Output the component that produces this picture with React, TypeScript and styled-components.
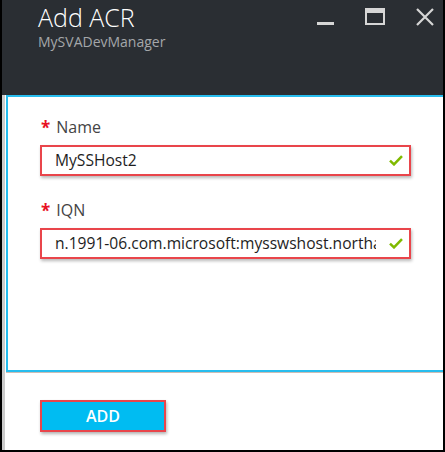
import styled, { createGlobalStyle } from "styled-components";

const GlobalStyle = createGlobalStyle`
  html, body {
    margin: 0;
    padding: 0;
    background: #000;
  }
  body {
    font-family: "Open Sans", "Noto Sans", Arial, sans-serif;
  }
`;

const Frame = styled.div`
  width: 441px;
  height: 450px;
  margin-left: 2px;
  display: flex;
  flex-direction: column;
  background: #fff;
  overflow: hidden;
`;

const Header = styled.header`
  height: 95px;
  flex: none;
  display: flex;
  padding: 2px 8px 0 36px;
  box-sizing: border-box;
  background: #2a2e33;
`;

const TitleBlock = styled.div`
  display: flex;
  flex-direction: column;
`;

const Title = styled.h1`
  margin: 0;
  font-size: 25px;
  line-height: 30px;
  font-weight: 300;
  color: #fff;
`;

const Subtitle = styled.div`
  margin-top: 1px;
  font-size: 14px;
  line-height: 18px;
  color: #a4a7aa;
`;

const Controls = styled.div`
  margin-left: auto;
  display: flex;
  gap: 30px;
  padding-top: 6px;
`;

const Body = styled.div`
  flex: 1;
  display: flex;
  flex-direction: column;
  border-left: 3px solid #cbcbcb;
  padding-left: 1px;
`;

const Blade = styled.section`
  height: 277px;
  box-sizing: border-box;
  border: 2px solid #27bdee;
  border-right: none;
  padding: 19px 32px 0 32px;
  box-shadow: 0 1px 0 #cdbdb5;
  display: flex;
  flex-direction: column;
  gap: 23px;
`;

const Group = styled.div`
  display: flex;
  flex-direction: column;
  gap: 7px;
`;

const Label = styled.label`
  display: flex;
  align-items: center;
  gap: 6px;
  padding-left: 1px;
  font-size: 16px;
  line-height: 20px;
  color: #444;
`;

const Required = styled.span`
  color: #e81123;
  font-weight: 700;
  font-size: 17px;
  line-height: 20px;
  margin-top: 2px;
`;

const Field = styled.div`
  height: 31px;
  box-sizing: border-box;
  border: 2px solid #e9454b;
  box-shadow: 1px 2px 3px rgba(0, 0, 0, 0.28);
  display: flex;
  align-items: center;
  gap: 13px;
  padding: 0 6px 0 13px;
  background: #fff;
`;

const Value = styled.span`
  flex: 1;
  min-width: 0;
  overflow: hidden;
  white-space: nowrap;
  font-size: 15.6px;
  line-height: 27px;
  color: #1e1e1e;
`;

const Footer = styled.div`
  padding: 28px 0 0 34px;
`;

const AddButton = styled.button`
  width: 126px;
  height: 32px;
  box-sizing: border-box;
  border: 2px solid #e9454b;
  background: #00bcf2;
  color: #fff;
  font-family: "Open Sans", "Noto Sans", Arial, sans-serif;
  font-size: 16px;
  font-weight: 600;
  padding: 0;
  box-shadow: 1px 2px 3px rgba(0, 0, 0, 0.3);
  cursor: pointer;
`;

const Check = () => (
  <svg width="14" height="11" viewBox="0 0 14 11">
    <path d="M1 5.6 L5 9.4 L13 1.2" fill="none" stroke="#7fba00" strokeWidth="2.5" />
  </svg>
);

const MinimizeIcon = () => (
  <svg width="20" height="18" viewBox="0 0 20 18">
    <rect x="2" y="14" width="17" height="3" fill="#d6d6d6" />
  </svg>
);

const MaximizeIcon = () => (
  <svg width="20" height="18" viewBox="0 0 20 18">
    <rect x="0" y="0" width="20" height="17" fill="#d6d6d6" />
    <rect x="2" y="5" width="16" height="10" fill="#2a2e33" />
  </svg>
);

const CloseIcon = () => (
  <svg width="20" height="18" viewBox="0 0 20 18">
    <path d="M2 1 L18 17 M18 1 L2 17" stroke="#d6d6d6" strokeWidth="2.2" />
  </svg>
);

const fields = [
  { label: "Name", value: "MySSHost2" },
  { label: "IQN", value: "n.1991-06.com.microsoft:mysswshost.northamerica.corp.microsoft.com" },
];

export default function App() {
  return (
    <>
      <GlobalStyle />
      <Frame>
        <Header>
          <TitleBlock>
            <Title>Add ACR</Title>
            <Subtitle>MySVADevManager</Subtitle>
          </TitleBlock>
          <Controls>
            <MinimizeIcon />
            <MaximizeIcon />
            <CloseIcon />
          </Controls>
        </Header>
        <Body>
          <Blade>
            {fields.map((f) => (
              <Group key={f.label}>
                <Label>
                  <Required>*</Required>
                  {f.label}
                </Label>
                <Field>
                  <Value>{f.value}</Value>
                  <Check />
                </Field>
              </Group>
            ))}
          </Blade>
          <Footer>
            <AddButton type="button">ADD</AddButton>
          </Footer>
        </Body>
      </Frame>
    </>
  );
}
